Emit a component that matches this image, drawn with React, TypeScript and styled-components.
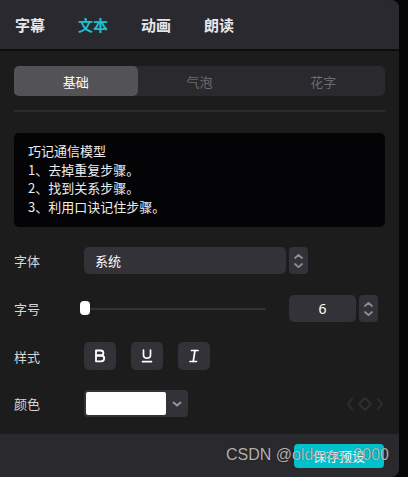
import React from "react";
import styled, { createGlobalStyle } from "styled-components";

const Global = createGlobalStyle`
  html, body { margin: 0; padding: 0; background: #07070a; }
  body { font-family: "Noto Sans CJK SC", "Noto Sans", sans-serif; }
  * { box-sizing: border-box; }
`;

const Panel = styled.div`
  position: relative;
  width: 399px;
  height: 477px;
  background: #1c1c1c;
  border-radius: 0 8px 8px 0;
  overflow: hidden;
  display: flex;
  flex-direction: column;
`;

const Header = styled.div`
  height: 49px;
  background: #2a292f;
  display: flex;
  align-items: center;
  padding-left: 15px;
  gap: 32px;
  border-bottom: 2px solid #0d0d10;
  flex-shrink: 0;
  box-sizing: content-box;
`;

const Tab = styled.div<{ $active?: boolean }>`
  font-size: 15px;
  font-weight: 700;
  color: ${(p) => (p.$active ? "#1cc0cf" : "#e6e6e8")};
  line-height: 20px;
  width: 31px;
`;

const Body = styled.div`
  flex: 1;
  padding: 15px 14px 0 14px;
  display: flex;
  flex-direction: column;
`;

const Segmented = styled.div`
  height: 30px;
  background: #2a292e;
  border-radius: 5px;
  display: grid;
  grid-template-columns: repeat(3, 1fr);
`;

const Segment = styled.div<{ $active?: boolean }>`
  display: flex;
  align-items: center;
  justify-content: center;
  font-size: 13px;
  border-radius: 5px;
  color: ${(p) => (p.$active ? "#ffffff" : "#6c6c70")};
  background: ${(p) => (p.$active ? "#525257" : "transparent")};
`;

const Divider = styled.div`
  height: 2px;
  background: #2c2c2f;
  margin-top: 14px;
`;

const TextBox = styled.div`
  margin-top: 21px;
  height: 94px;
  background: #040406;
  border-radius: 5px;
  padding: 9px 14px;
  color: #ececee;
  font-size: 13px;
  line-height: 18.6px;
`;

const Rows = styled.div`
  margin-top: 20px;
  display: flex;
  flex-direction: column;
  gap: 20px;
`;

const Row = styled.div<{ $h?: number; $mt?: number }>`
  height: ${(p) => p.$h ?? 27}px;
  margin-top: ${(p) => p.$mt ?? 0}px;
  display: flex;
  align-items: center;
`;

const Label = styled.div`
  width: 70px;
  font-size: 13px;
  color: #d6d6d8;
`;

const Select = styled.div`
  width: 202px;
  height: 27px;
  background: #333238;
  border-radius: 5px;
  display: flex;
  align-items: center;
  padding-left: 11px;
  font-size: 13px;
  color: #ffffff;
`;

const Stepper = styled.div<{ $ml?: number }>`
  width: 19px;
  height: 27px;
  margin-left: ${(p) => p.$ml ?? 3}px;
  background: #333238;
  border-radius: 4px;
  display: flex;
  align-items: center;
  justify-content: center;
`;

const SliderWrap = styled.div`
  position: relative;
  width: 182px;
  height: 27px;
  display: flex;
  align-items: center;
  margin-right: 23px;
`;

const Track = styled.div`
  width: 100%;
  height: 2px;
  background: #333336;
  border-radius: 1px;
`;

const Thumb = styled.div`
  position: absolute;
  left: -4px;
  top: 6px;
  width: 10px;
  height: 14px;
  background: #ffffff;
  border-radius: 4px;
`;

const NumberBox = styled.div`
  width: 67px;
  height: 27px;
  background: #333238;
  border-radius: 5px;
  display: flex;
  align-items: center;
  justify-content: center;
  font-size: 14px;
  color: #ffffff;
  font-family: "Noto Sans", sans-serif;
`;

const StyleButtons = styled.div`
  display: flex;
  gap: 15px;
`;

const StyleBtn = styled.div`
  width: 32px;
  height: 28px;
  background: #333238;
  border-radius: 5px;
  display: flex;
  align-items: center;
  justify-content: center;
  color: #ffffff;
`;

const ColorPicker = styled.div`
  width: 104px;
  height: 27px;
  background: #333238;
  border-radius: 4px;
  display: flex;
  align-items: center;
  padding-left: 2px;
`;

const Swatch = styled.div`
  width: 80px;
  height: 23px;
  background: #ffffff;
  border-radius: 2px;
`;

const SwatchArrow = styled.div`
  flex: 1;
  display: flex;
  justify-content: center;
  align-items: center;
`;

const Spacer = styled.div`
  flex: 1;
`;

const KeyNav = styled.div`
  display: flex;
  align-items: center;
  margin-right: 0px;
`;

const Footer = styled.div`
  height: 43px;
  background: #2a292e;
  display: flex;
  align-items: center;
  justify-content: flex-end;
  padding-right: 15px;
  margin-top: 17px;
  flex-shrink: 0;
`;

const SaveBtn = styled.div`
  width: 90px;
  height: 24px;
  background: #00c1cc;
  border-radius: 4px;
  color: #ffffff;
  font-size: 13px;
  display: flex;
  align-items: center;
  justify-content: center;
`;

const Watermark = styled.div`
  position: absolute;
  left: 226px;
  top: 446px;
  font-family: "Liberation Sans", Arial, sans-serif;
  font-size: 16px;
  color: rgba(215, 215, 215, 0.82);
  text-shadow: 0 0 1px rgba(0, 0, 0, 0.6);
  white-space: nowrap;
  pointer-events: none;
`;

const Chevrons = () => (
  <svg width="11" height="20" viewBox="0 0 11 20" fill="none" stroke="#8d8d92" strokeWidth="1.8" strokeLinecap="round" strokeLinejoin="round">
    <path d="M2 7 L5.5 3.8 L9 7" />
    <path d="M2 13 L5.5 16.2 L9 13" />
  </svg>
);

const Down = () => (
  <svg width="10" height="8" viewBox="0 0 10 8" fill="none" stroke="#9a9a9e" strokeWidth="1.8" strokeLinecap="round" strokeLinejoin="round">
    <path d="M1.5 2.5 L5 5.5 L8.5 2.5" />
  </svg>
);

const BoldIcon = () => (
  <svg width="12" height="14" viewBox="0 0 12 14" fill="none" stroke="#fff" strokeWidth="1.8" strokeLinejoin="round">
    <path d="M2 1.5 H6.5 C8.6 1.5 9.4 2.6 9.4 4 C9.4 5.5 8.4 6.5 6.5 6.5 H2 Z" />
    <path d="M2 6.5 H7 C9.2 6.5 10.2 7.7 10.2 9.3 C10.2 11 9 12.3 7 12.3 H2 Z" />
  </svg>
);

const UnderlineIcon = () => (
  <svg width="12" height="14" viewBox="0 0 12 14" fill="none" stroke="#fff" strokeWidth="1.7" strokeLinecap="round">
    <path d="M2.5 1 V6 C2.5 8.2 3.8 9.2 6 9.2 C8.2 9.2 9.5 8.2 9.5 6 V1" />
    <path d="M1.5 12.6 H10.5" />
  </svg>
);

const ItalicIcon = () => (
  <svg width="12" height="14" viewBox="0 0 12 14" fill="none" stroke="#fff" strokeWidth="1.7" strokeLinecap="round">
    <path d="M3.5 1.5 H10" />
    <path d="M2 12.5 H8.5" />
    <path d="M7 1.5 L5.2 12.5" />
  </svg>
);

const KeyframeIcon = () => (
  <svg width="40" height="20" viewBox="0 0 40 20" fill="none" stroke="#2e2e31" strokeWidth="2" strokeLinecap="round" strokeLinejoin="round">
    <path d="M7 5 L3 10 L7 15" />
    <path d="M20 4 L26 10 L20 16 L14 10 Z" />
    <path d="M33 5 L37 10 L33 15" />
  </svg>
);

export default function App() {
  return (
    <>
      <Global />
      <Panel>
        <Header>
          <Tab>字幕</Tab>
          <Tab $active>文本</Tab>
          <Tab>动画</Tab>
          <Tab>朗读</Tab>
        </Header>
        <Body>
          <Segmented>
            <Segment $active>基础</Segment>
            <Segment>气泡</Segment>
            <Segment>花字</Segment>
          </Segmented>
          <Divider />
          <TextBox>
            <div>巧记通信模型</div>
            <div>1、去掉重复步骤。</div>
            <div>2、找到关系步骤。</div>
            <div>3、利用口诀记住步骤。</div>
          </TextBox>
          <Rows>
            <Row>
              <Label>字体</Label>
              <Select>系统</Select>
              <Stepper>
                <Chevrons />
              </Stepper>
            </Row>
            <Row $mt={1}>
              <Label>字号</Label>
              <SliderWrap>
                <Track />
                <Thumb />
              </SliderWrap>
              <NumberBox>6</NumberBox>
              <Stepper>
                <Chevrons />
              </Stepper>
            </Row>
            <Row $h={28}>
              <Label>样式</Label>
              <StyleButtons>
                <StyleBtn>
                  <BoldIcon />
                </StyleBtn>
                <StyleBtn>
                  <UnderlineIcon />
                </StyleBtn>
                <StyleBtn>
                  <ItalicIcon />
                </StyleBtn>
              </StyleButtons>
            </Row>
            <Row>
              <Label>颜色</Label>
              <ColorPicker>
                <Swatch />
                <SwatchArrow>
                  <Down />
                </SwatchArrow>
              </ColorPicker>
              <Spacer />
              <KeyNav>
                <KeyframeIcon />
              </KeyNav>
            </Row>
          </Rows>
        </Body>
        <Footer>
          <SaveBtn>保存预设</SaveBtn>
        </Footer>
        <Watermark>CSDN @oldmao_2000</Watermark>
      </Panel>
    </>
  );
}
